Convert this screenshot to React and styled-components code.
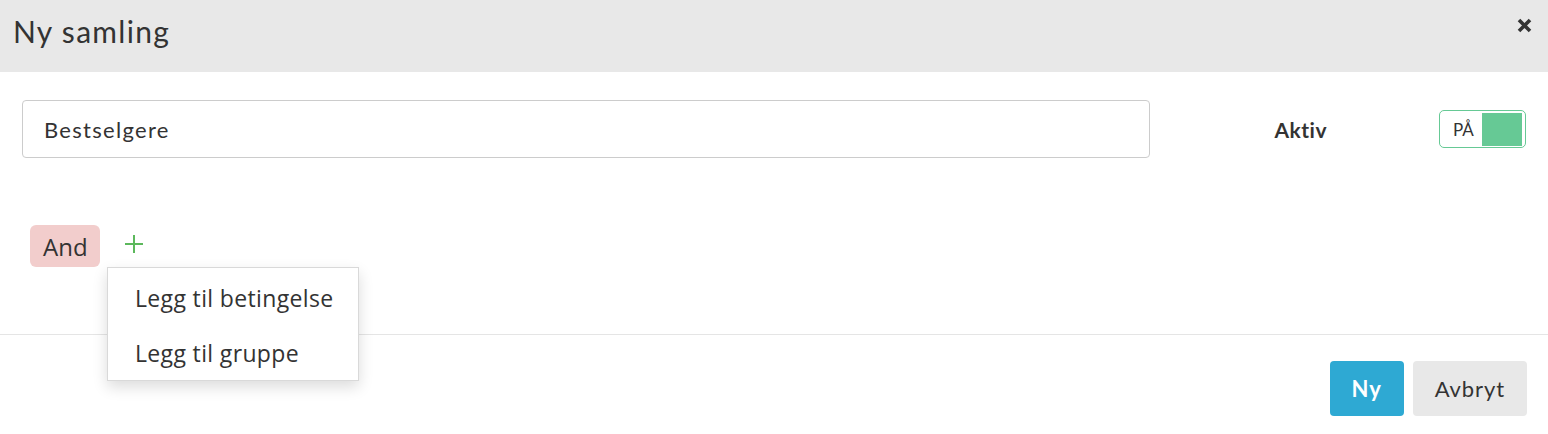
import React, { useState } from "react";
import styled, { createGlobalStyle } from "styled-components";

const GlobalStyle = createGlobalStyle`
  body {
    margin: 0;
    background: #fff;
    color: #333;
    font-family: "Lato", "Noto Sans", sans-serif;
  }
`;

const StyledModal = styled.div`
  width: 100%;
  height: 434px;
  display: flex;
  flex-direction: column;
  background: #fff;
`;

const StyledHeader = styled.div`
  height: 72px;
  flex-shrink: 0;
  box-sizing: border-box;
  display: flex;
  align-items: flex-start;
  justify-content: space-between;
  padding: 13px 16px 0 13px;
  background: #e8e8e8;

  h1 {
    margin: 0;
    font-size: 30px;
    line-height: 36px;
    font-weight: 400;
    color: #333;
    letter-spacing: 1.3px;
  }
`;

const StyledClose = styled.button`
  border: none;
  background: none;
  padding: 0;
  margin-top: 5px;
  display: flex;
  cursor: pointer;
`;

const StyledBody = styled.div`
  position: relative;
  height: 262px;
  flex-shrink: 0;
  padding: 28px 22px 0 22px;
  box-sizing: border-box;
`;

const StyledNameRow = styled.div`
  display: flex;
  align-items: center;
`;

const StyledInput = styled.input`
  flex: 1;
  height: 58px;
  box-sizing: border-box;
  border: 1px solid #cccccc;
  border-radius: 4px;
  padding: 0 21px;
  font-family: "Lato", "Noto Sans", sans-serif;
  font-size: 22px;
  letter-spacing: 1.3px;
  color: #333;
  outline: none;
`;

const StyledLabel = styled.span`
  margin-left: 124px;
  font-size: 21px;
  font-weight: 700;
  letter-spacing: 0.5px;
  color: #333;
`;

const StyledToggle = styled.div`
  margin-left: 112px;
  width: 87px;
  height: 38px;
  box-sizing: border-box;
  display: flex;
  align-items: center;
  justify-content: space-between;
  padding: 2px 3px 2px 13px;
  border: 1px solid #66c995;
  border-radius: 5px;
  cursor: pointer;

  span {
    font-size: 17px;
    color: #333;
  }
`;

const StyledKnob = styled.div`
  width: 40px;
  height: 33px;
  background: ${({ $on }) => ($on ? "#66c995" : "#ddd")};
`;

const StyledRuleRow = styled.div`
  position: relative;
  display: flex;
  align-items: center;
  margin-top: 67px;
  padding-left: 8px;
`;

const StyledOperator = styled.span`
  height: 42px;
  display: flex;
  align-items: center;
  padding: 0 12px 0 13px;
  border-radius: 6px;
  background: #f2cdcc;
  font-family: "Open Sans", "Noto Sans", sans-serif;
  font-size: 24px;
  color: #333;
`;

const StyledAdd = styled.button`
  margin: 0 0 5px 24px;
  border: none;
  background: none;
  padding: 0;
  display: flex;
  cursor: pointer;
`;

const StyledMenu = styled.ul`
  position: absolute;
  z-index: 5;
  top: 42px;
  left: 85px;
  width: 252px;
  margin: 0;
  padding: 2px 0 0 0;
  list-style: none;
  box-sizing: border-box;
  background: #fff;
  border: 1px solid #d9d9d9;
  box-shadow: 0 6px 14px rgba(0, 0, 0, 0.14);

  li {
    height: 55px;
    display: flex;
    align-items: center;
    padding: 0 27px;
    white-space: nowrap;
    font-family: "Open Sans", "Noto Sans", sans-serif;
    font-size: 23px;
    letter-spacing: 0.35px;
    color: #333;
    cursor: pointer;
  }
`;

const StyledFooter = styled.div`
  flex: 1;
  display: flex;
  justify-content: flex-end;
  align-items: flex-start;
  gap: 9px;
  padding: 26px 21px 0 0;
  border-top: 1px solid #e5e5e5;
`;

const StyledButton = styled.button`
  height: 55px;
  padding: 0 22px;
  border: none;
  border-radius: 4px;
  background: ${({ $primary }) => ($primary ? "#2ea9d3" : "#e8e8e8")};
  color: ${({ $primary }) => ($primary ? "#fff" : "#333")};
  font-family: "Lato", "Noto Sans", sans-serif;
  font-size: 22px;
  letter-spacing: 0.9px;
  font-weight: ${({ $primary }) => ($primary ? 700 : 400)};
  cursor: pointer;
`;

const CloseIcon = () => (
  <svg width="15" height="15" viewBox="0 0 15 15">
    <path d="M2 2l11 11M13 2L2 13" stroke="#333" strokeWidth="3.6" fill="none" />
  </svg>
);

const PlusIcon = () => (
  <svg width="20" height="20" viewBox="0 0 20 20">
    <path d="M10 1v18M1 10h18" stroke="#5cb85c" strokeWidth="2" fill="none" />
  </svg>
);

const App = () => {
  const [name, setName] = useState("Bestselgere");
  const [active, setActive] = useState(true);

  return (
    <StyledModal>
      <GlobalStyle />
      <StyledHeader>
        <h1>Ny samling</h1>
        <StyledClose aria-label="Lukk">
          <CloseIcon />
        </StyledClose>
      </StyledHeader>

      <StyledBody>
        <StyledNameRow>
          <StyledInput value={name} onChange={(e) => setName(e.target.value)} />
          <StyledLabel>Aktiv</StyledLabel>
          <StyledToggle onClick={() => setActive(!active)}>
            <span>{active ? "PÅ" : "AV"}</span>
            <StyledKnob $on={active} />
          </StyledToggle>
        </StyledNameRow>

        <StyledRuleRow>
          <StyledOperator>And</StyledOperator>
          <StyledAdd aria-label="Legg til">
            <PlusIcon />
          </StyledAdd>
          <StyledMenu>
            <li>Legg til betingelse</li>
            <li>Legg til gruppe</li>
          </StyledMenu>
        </StyledRuleRow>
      </StyledBody>

      <StyledFooter>
        <StyledButton $primary>Ny</StyledButton>
        <StyledButton>Avbryt</StyledButton>
      </StyledFooter>
    </StyledModal>
  );
};

export default App;
